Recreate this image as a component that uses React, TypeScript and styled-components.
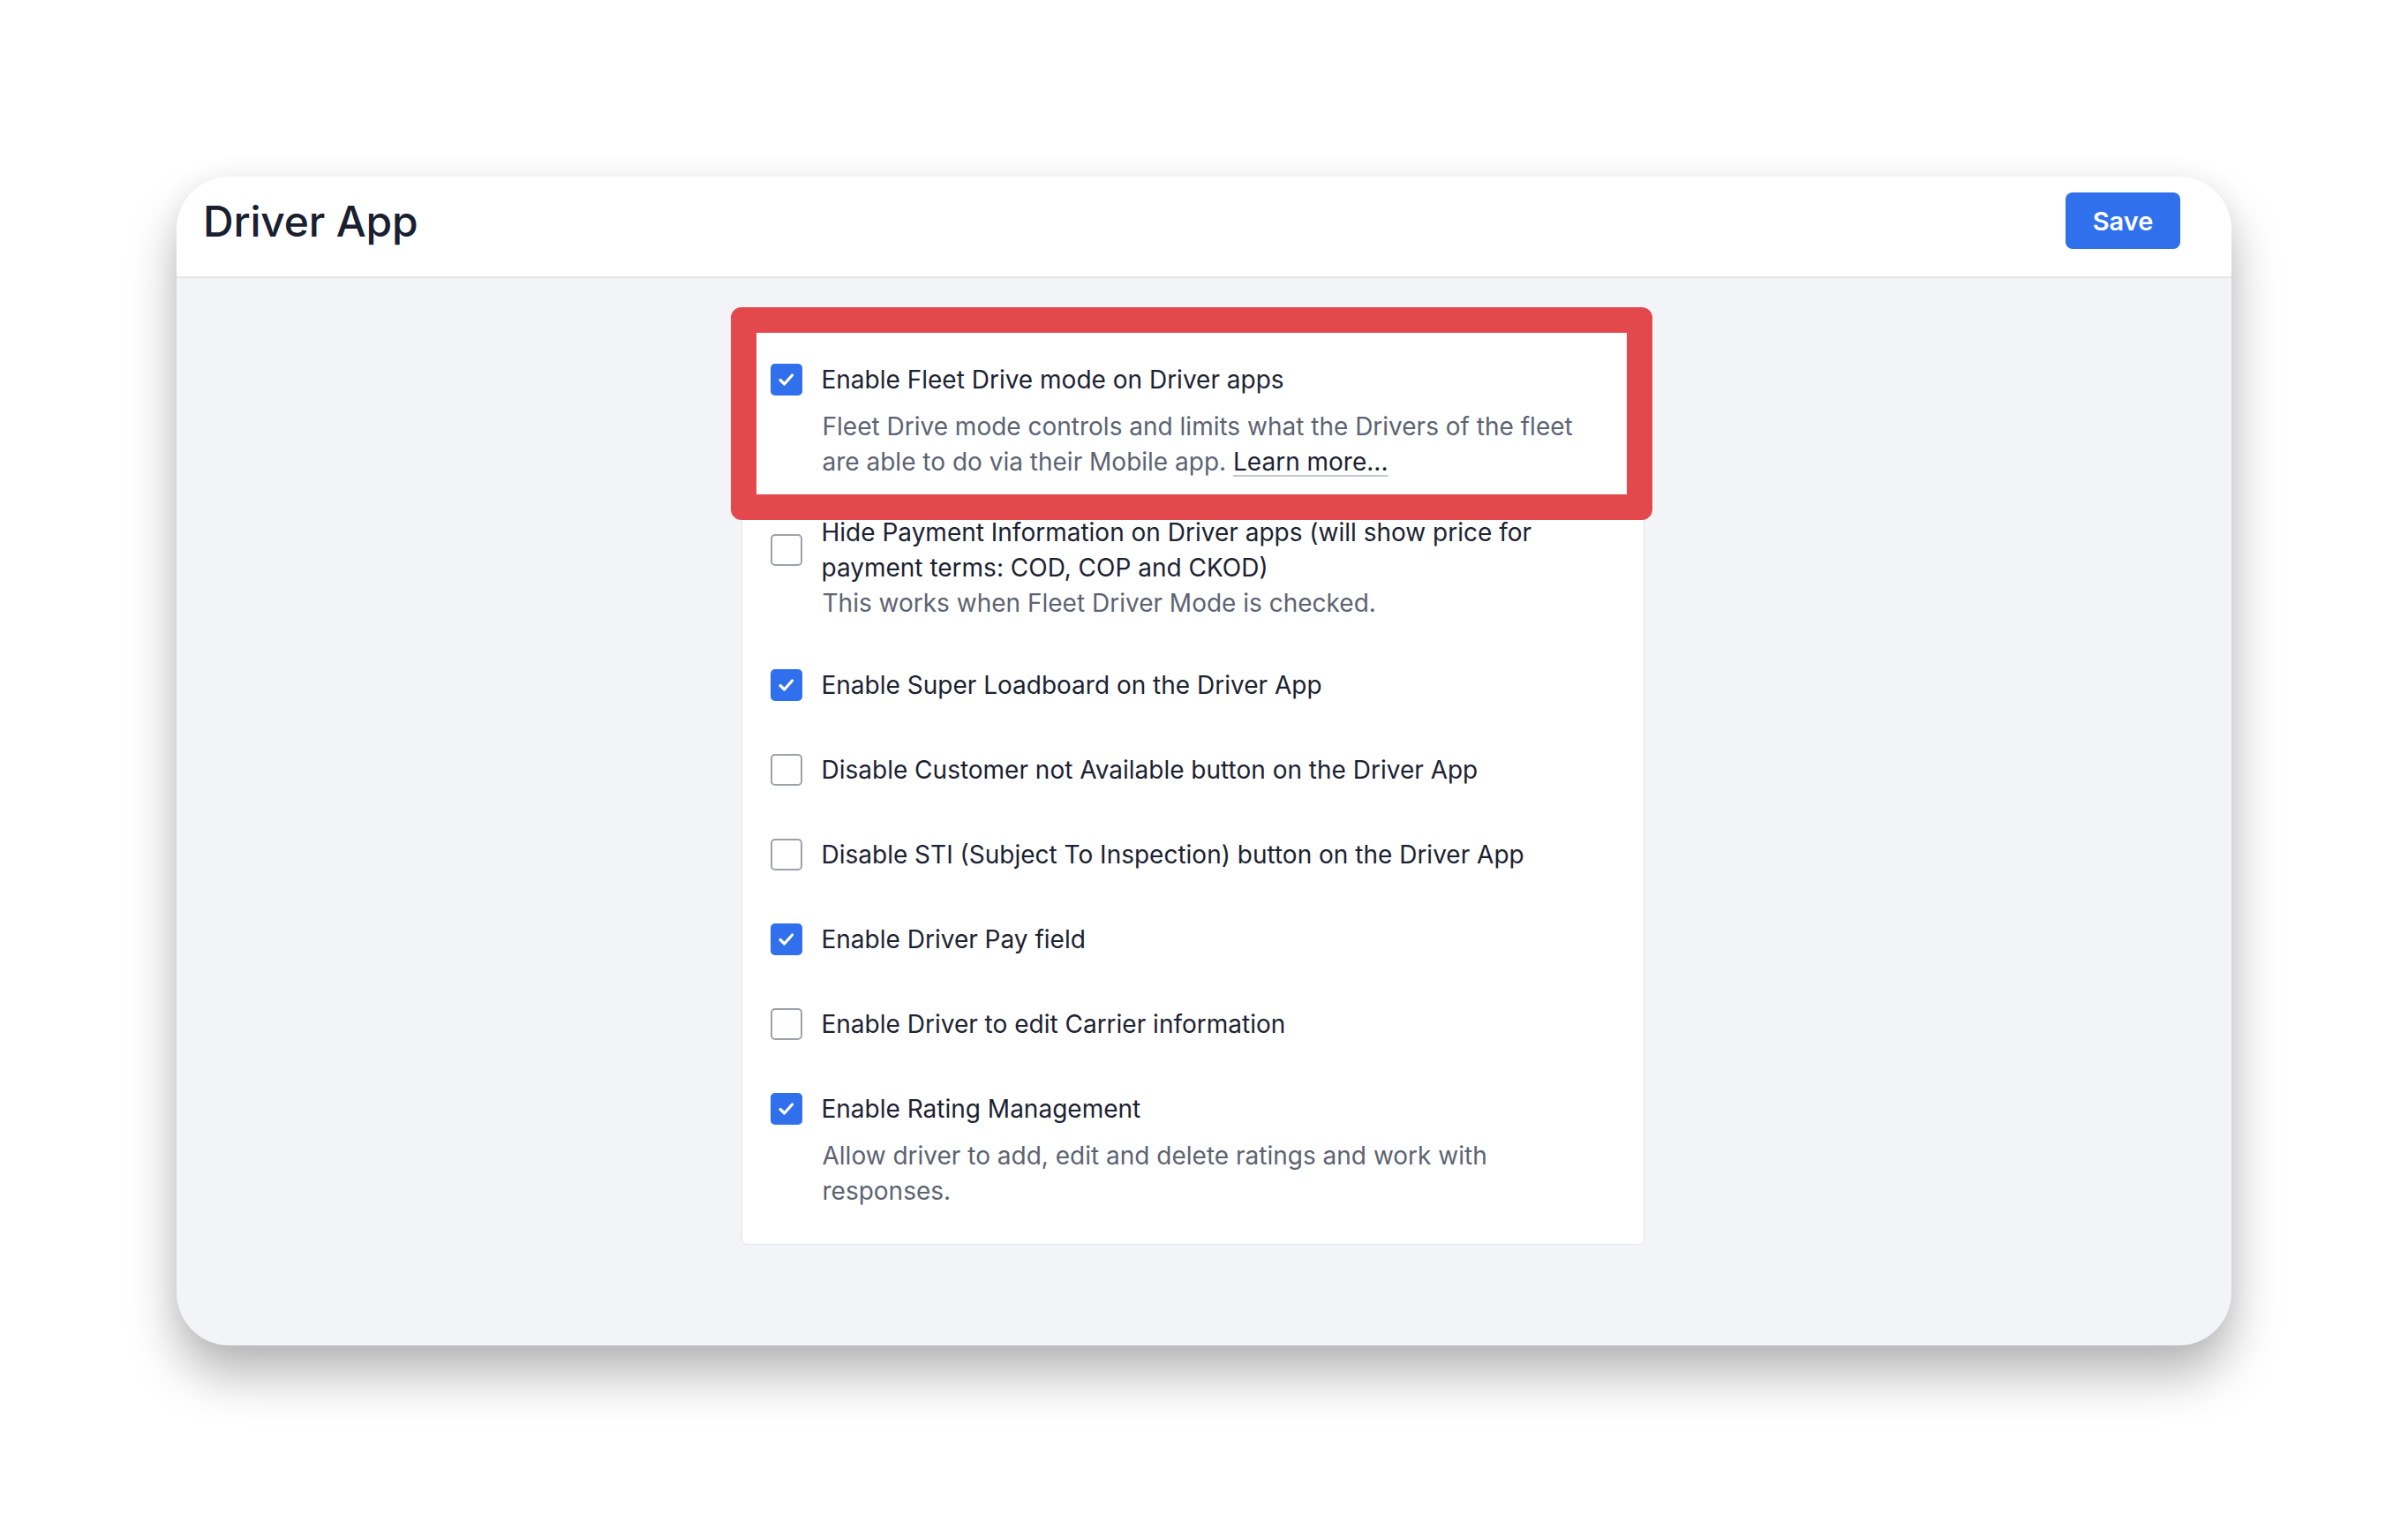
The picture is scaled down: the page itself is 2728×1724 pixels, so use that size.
import React from "react";
import styled, { createGlobalStyle } from "styled-components";

const GlobalStyle = createGlobalStyle`
  html, body {
    margin: 0;
    padding: 0;
    background: #ffffff;
  }
  body {
    font-family: "Inter", "Noto Sans", "Liberation Sans", sans-serif;
    -webkit-font-smoothing: antialiased;
  }
`;

const Page = styled.div`
  padding: 200px;
  width: 2728px;
  box-sizing: border-box;
`;

const Window = styled.div`
  height: 1324px;
  border-radius: 60px;
  overflow: hidden;
  background: #f3f4f8;
  display: flex;
  flex-direction: column;
  box-shadow: 0 0 30px rgba(0, 0, 0, 0.05), 0 34px 56px rgba(0, 0, 0, 0.28);
`;

const Header = styled.header`
  display: flex;
  align-items: center;
  justify-content: space-between;
  height: 115px;
  box-sizing: border-box;
  padding: 18px 58px 31px 30px;
  background: #ffffff;
  border-bottom: 2px solid #e3e5ea;
`;

const Title = styled.h1`
  margin: 0;
  font-size: 48px;
  font-weight: 500;
  color: #1a2030;
  letter-spacing: -0.2px;
`;

const SaveButton = styled.button`
  width: 130px;
  height: 64px;
  border: none;
  border-radius: 8px;
  background: #3070ec;
  color: #ffffff;
  font-family: inherit;
  font-size: 29px;
  font-weight: 600;
  cursor: pointer;
`;

const Body = styled.main`
  flex: 1;
  display: flex;
  justify-content: center;
  align-items: flex-start;
  padding: 54px 26px 0 0;
`;

const Panel = styled.section`
  width: 1023px;
  box-sizing: border-box;
  background: #ffffff;
  border: 1px solid #e3e5ea;
  border-radius: 6px;
  padding: 40px 32px 40px 32px;
  display: flex;
  flex-direction: column;
`;

const Item = styled.div<{ $space: number }>`
  position: relative;
  display: grid;
  grid-template-columns: 36px minmax(0, 870px);
  column-gap: 22px;
  align-items: center;
  margin-top: ${({ $space }) => $space}px;
`;

const Box = styled.span<{ $checked: boolean }>`
  width: 36px;
  height: 36px;
  box-sizing: border-box;
  border-radius: 5px;
  display: flex;
  align-items: center;
  justify-content: center;
  background: ${({ $checked }) => ($checked ? "#3070ec" : "#ffffff")};
  border: ${({ $checked }) => ($checked ? "none" : "2px solid #9ca1ab")};
`;

const Label = styled.div`
  font-size: 28px;
  line-height: 40px;
  color: #1c2231;
`;

const Description = styled.div<{ $tight: boolean }>`
  grid-column: 2;
  margin-top: ${({ $tight }) => ($tight ? 0 : 13)}px;
  padding-left: 1px;
  font-size: 28px;
  line-height: 40px;
  color: #5d6372;
`;

const LearnMore = styled.a`
  color: #1c2231;
  text-decoration: underline;
  text-decoration-color: #c3c9d3;
  text-decoration-thickness: 2px;
  text-underline-offset: 5px;
`;

const Highlight = styled.div`
  position: absolute;
  top: -62px;
  left: -45px;
  right: -42px;
  bottom: -46px;
  border: 29px solid #e3494c;
  border-radius: 12px;
  pointer-events: none;
`;

const Check = () => (
  <svg width="24" height="24" viewBox="0 0 24 24" fill="none">
    <path d="M5 12.5 L9.6 17 L18.5 7" stroke="#fff" strokeWidth="3.2" strokeLinecap="round" strokeLinejoin="round" />
  </svg>
);

type Option = {
  label: React.ReactNode;
  desc?: React.ReactNode;
  checked: boolean;
  space: number;
  tight?: boolean;
  highlight?: boolean;
};

const options: Option[] = [
  {
    label: "Enable Fleet Drive mode on Driver apps",
    desc: (
      <>
        Fleet Drive mode controls and limits what the Drivers of the fleet are able to do via
        their Mobile app. <LearnMore href="#">Learn more...</LearnMore>
      </>
    ),
    checked: true,
    space: 0,
    highlight: true,
  },
  {
    label: "Hide Payment Information on Driver apps (will show price for payment terms: COD, COP and CKOD)",
    desc: "This works when Fleet Driver Mode is checked.",
    checked: false,
    space: 40,
    tight: true,
  },
  { label: "Enable Super Loadboard on the Driver App", checked: true, space: 53 },
  { label: "Disable Customer not Available button on the Driver App", checked: false, space: 56 },
  { label: "Disable STI (Subject To Inspection) button on the Driver App", checked: false, space: 56 },
  { label: "Enable Driver Pay field", checked: true, space: 56 },
  { label: "Enable Driver to edit Carrier information", checked: false, space: 56 },
  {
    label: "Enable Rating Management",
    desc: "Allow driver to add, edit and delete ratings and work with responses.",
    checked: true,
    space: 56,
  },
];

export default function App() {
  return (
    <>
      <GlobalStyle />
      <Page>
        <Window>
          <Header>
            <Title>Driver App</Title>
            <SaveButton>Save</SaveButton>
          </Header>
          <Body>
            <Panel>
              {options.map((o, i) => (
                <Item key={i} $space={o.space}>
                  <Box $checked={o.checked}>{o.checked && <Check />}</Box>
                  <Label>{o.label}</Label>
                  {o.desc && <Description $tight={!!o.tight}>{o.desc}</Description>}
                  {o.highlight && <Highlight />}
                </Item>
              ))}
            </Panel>
          </Body>
        </Window>
      </Page>
    </>
  );
}
